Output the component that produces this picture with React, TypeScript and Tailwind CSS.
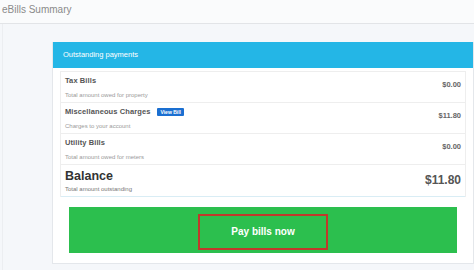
import React from "react";

const rows = [
  { title: "Tax Bills", sub: "Total amount owed for property", amount: "$0.00", badge: false },
  { title: "Miscellaneous Charges", sub: "Charges to your account", amount: "$11.80", badge: true },
  { title: "Utility Bills", sub: "Total amount owed for meters", amount: "$0.00", badge: false },
];

export default function App() {
  return (
    <div
      className="w-[474px] h-[270px] overflow-hidden bg-[#f5f7fa] flex flex-col"
      style={{ fontFamily: '"Liberation Sans", Arial, sans-serif' }}
    >
      <div className="h-[24px] shrink-0 bg-[#fafbfc] border-b border-[#e2e4e7] px-[2px] flex items-center">
        <span className="text-[10px] leading-[12px] text-[#8a8a8a] -mt-[3px]">eBills Summary</span>
      </div>
      <div className="flex-1 ml-[2px] border-l border-[#eceef1] pl-[49px] pt-[18px]">
        <div className="w-[422px] bg-white border-x border-b border-[#e4e7eb] flex flex-col">
          <div className="h-[26px] bg-[#24b6e6] px-[10px] flex items-center">
            <span className="text-[7.5px] text-white leading-[10px]">Outstanding payments</span>
          </div>
          <div className="px-[7px] pt-[3px] pb-[10px] flex flex-col">
            <div className="border-x border-t border-[#eeeeee] flex flex-col">
              {rows.map((r) => (
                <div
                  key={r.title}
                  className="flex justify-between items-start px-[4px] border-b border-[#eeeeee] h-[31px]"
                >
                  <div className="pt-[4px] flex flex-col">
                    <div className="flex items-center">
                      <span className="text-[7.5px] leading-[10px] font-bold text-[#555] tracking-[0.1px]">
                        {r.title}
                      </span>
                      {r.badge && (
                        <span className="ml-[7px] h-[8px] px-[3px] bg-[#1b6fd1] text-white text-[5px] leading-[8px] font-bold rounded-[1px]">
                          View Bill
                        </span>
                      )}
                    </div>
                    <span className="mt-[5px] text-[6px] leading-[8px] text-[#9a9a9a]">{r.sub}</span>
                  </div>
                  <span className="pt-[8px] text-[7.5px] leading-[10px] font-bold text-[#666]">{r.amount}</span>
                </div>
              ))}
              <div className="flex justify-between items-start px-[4px] border-b border-[#d9edf5] h-[32px]">
                <div className="pt-[4px] flex flex-col">
                  <span className="text-[12.5px] leading-[14px] font-bold text-[#333]">Balance</span>
                  <span className="mt-[2px] text-[6px] leading-[8px] text-[#777]">Total amount outstanding</span>
                </div>
                <span className="pt-[8px] text-[12px] leading-[14px] font-bold text-[#555]">$11.80</span>
              </div>
            </div>
            <div className="mt-[10px] mx-[9px] h-[46px] bg-[#2cbf4e] flex justify-center pt-[7px]">
              <div className="w-[130px] h-[36px] border-2 border-[#c0392b] flex items-center justify-center">
                <span className="text-[10px] leading-[12px] font-bold text-white">Pay bills now</span>
              </div>
            </div>
          </div>
        </div>
      </div>
    </div>
  );
}
